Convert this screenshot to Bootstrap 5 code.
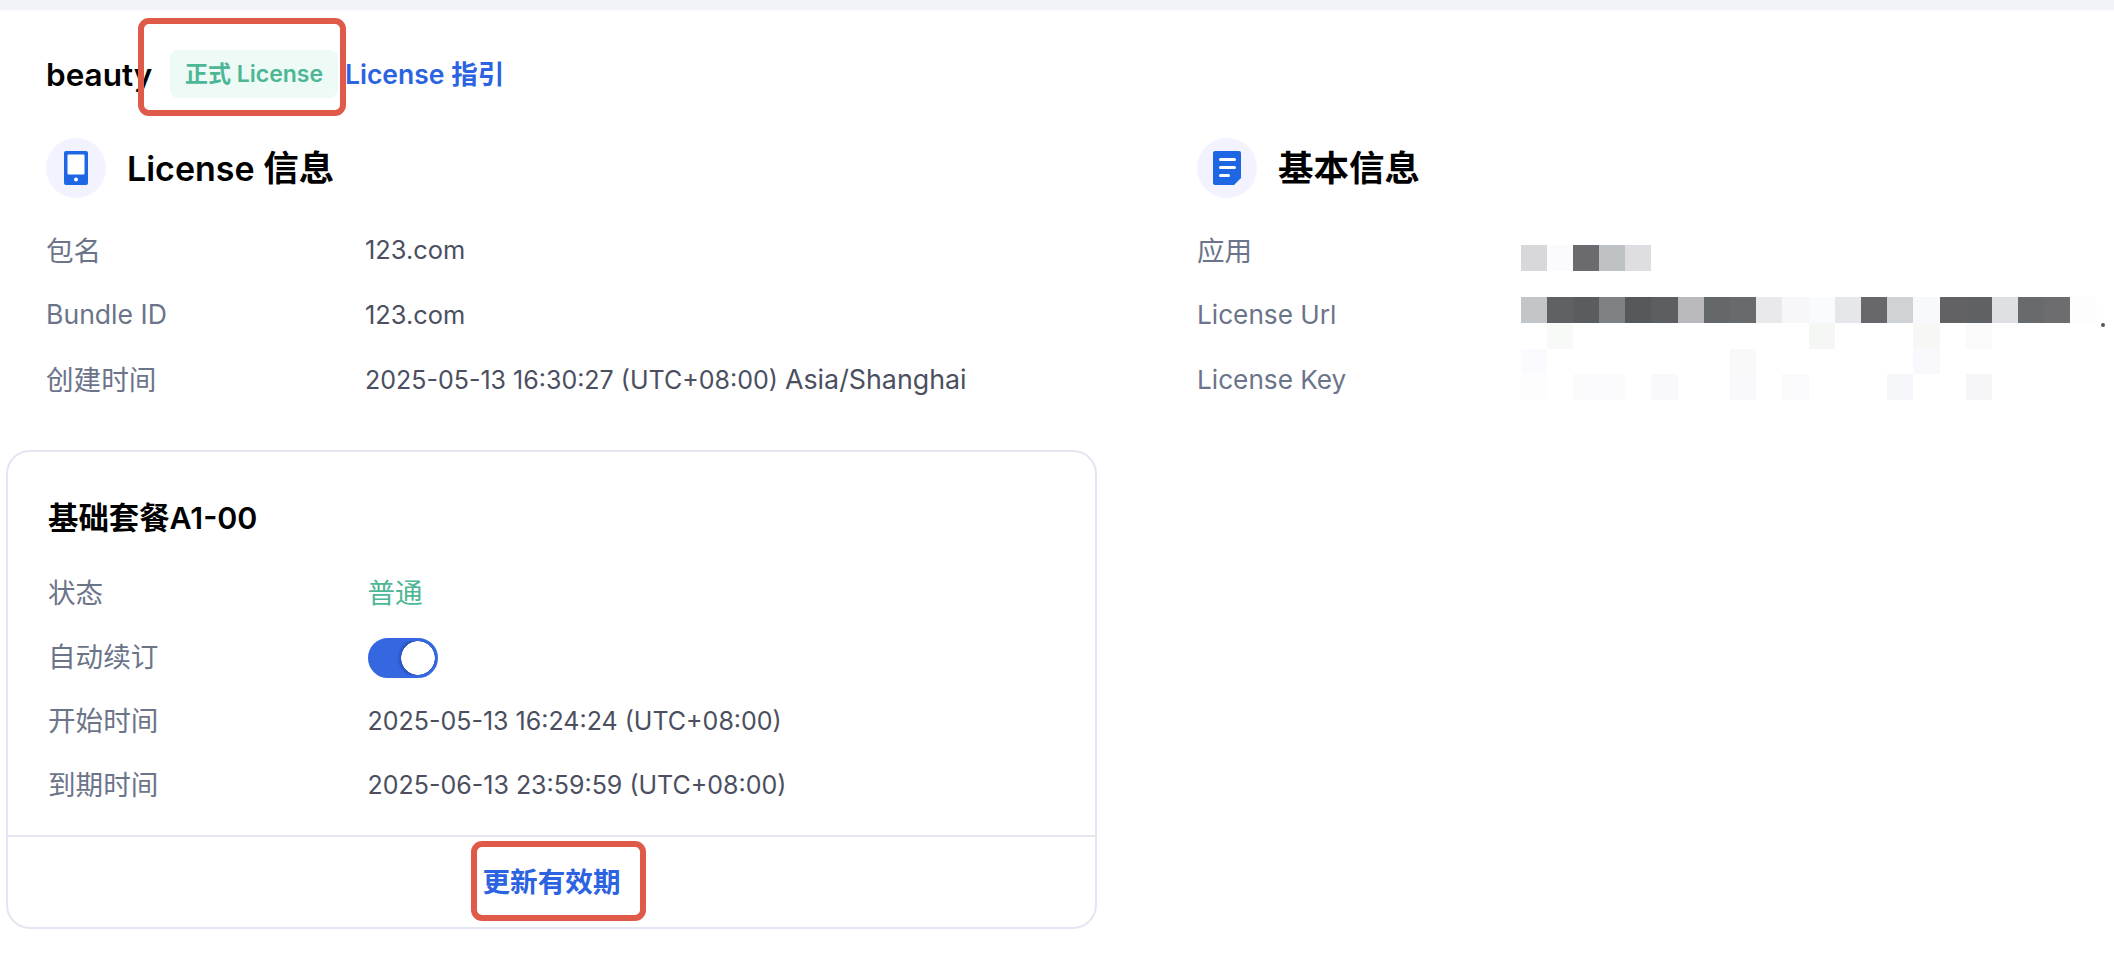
<!DOCTYPE html>
<html lang="zh-CN">
<head>
<meta charset="utf-8">
<title>License</title>
<link href="https://cdn.jsdelivr.net/npm/bootstrap@5.3.0/dist/css/bootstrap.min.css" rel="stylesheet">
<style>
body{font-family:Inter,"Noto Sans CJK SC",sans-serif;background:#fff;color:#4b4f60;font-size:25.4px}
.top-band{height:10px;background:#f2f3f8}
.page-wrap{padding:40px 6px 29px 6px}
.hdr{height:48px;padding-left:40px}
.app-name{font-size:31.5px;font-weight:600;color:#000;width:124px;padding-top:2px}
.lic-badge{position:relative;height:48px;width:168px;background:#edfaf6;color:#4db795;border-radius:8px;font-size:23px;font-weight:600}
.guide-link{margin-left:7px;padding-top:2px;color:#2b63e0;font-weight:600;font-size:26.5px;text-decoration:none}
.red-box{position:absolute;border:6px solid #e05a4a;border-radius:11px;pointer-events:none}
.red-a{left:-32px;right:-8px;top:-32px;bottom:-18px}
.info-cols{margin-top:40px;padding-left:40px}
.info-left{width:1151px}
.sec-head{height:60px;gap:21px;margin-bottom:20px}
.ico-circle{width:60px;height:60px;border-radius:50%;background:#f2f3fe}
.sec-title{font-size:34px;font-weight:600;color:#000;padding-top:2px}
.sec-title .han{font-size:35.5px}
.kv-row{height:64.5px}
.kv-label{width:319px;color:#6c7489;font-size:26.6px}
.kv-label .han,.kv-label-r .han{font-size:27.6px;display:inline-block;padding-top:2px}
.kv-label-r{width:323.5px;color:#6c7489;font-size:26.2px}
.kv-date{font-size:25px}
.kv-place{font-size:26.8px}
.kv-mosaic-wrap{position:relative;height:193.5px}
.mosaic{display:grid;grid-template-columns:repeat(22,26.2px);grid-auto-rows:25.9px;margin-top:27px}
.mosaic-labels{width:323.5px;flex:none}
.dot-end{position:absolute;width:4px;height:4px;border-radius:50%;background:#555;left:904px;top:105px}
.plan-card{margin-top:38.5px;width:1091px;height:479px;border:2px solid #e3e6f0;border-radius:24px;--bs-card-bg:#fff;overflow:visible}
.plan-body{padding:0 40px;height:383px;flex:none}
.plan-title{font-size:30.4px;font-weight:600;color:#000;height:110px;padding-top:33px;line-height:66px}
.plan-title span{display:block}
.kv-row-c{height:64px}
.kv-label-c{width:319.5px;color:#6c7489;font-size:27.6px}
.val-c{font-size:25px}
.ok-text{color:#4db795;font-size:27.6px}
.tog{width:70px!important;height:40px;margin:0!important;float:none!important;background-color:#3567e0!important;border:3px solid #3567e0!important;box-shadow:none!important;background-image:radial-gradient(circle at calc(100% - 17px) 50%,#fff 16.5px,#2a52b8 17px,#3567e0 21px)!important;background-size:100% 100%!important;background-position:center!important}
.plan-foot{border-top:2px solid #e3e6f0;background:transparent;padding:0;flex:1}
.renew{position:relative;display:inline-block;line-height:40px;color:#2b63e0;font-weight:600;font-size:27.6px;text-decoration:none}
.red-b{left:-12px;right:-26px;top:-21px;bottom:-19px}
</style>
</head>
<body>
<div class="top-band"></div>
<div class="page-wrap">
  <div class="hdr d-flex align-items-center">
    <span class="app-name">beauty</span>
    <span class="lic-badge d-inline-flex align-items-center justify-content-center">正式 License<span class="red-box red-a"></span></span>
    <a class="guide-link" href="#">License 指引</a>
  </div>
  <div class="info-cols d-flex">
    <div class="info-left">
      <div class="sec-head d-flex align-items-center">
        <span class="ico-circle d-flex align-items-center justify-content-center">
          <svg width="24" height="34" viewBox="0 0 24 34"><rect width="24" height="34" rx="2" fill="#1f66e5"/><rect x="3.5" y="3.5" width="17" height="20" rx="1" fill="#fff"/><circle cx="12" cy="28.5" r="2" fill="#fff"/></svg>
        </span>
        <span class="sec-title">License <span class="han">信息</span></span>
      </div>
      <div class="kv-row d-flex align-items-center"><span class="kv-label"><span class="han">包名</span></span><span>123.com</span></div>
      <div class="kv-row d-flex align-items-center"><span class="kv-label">Bundle ID</span><span>123.com</span></div>
      <div class="kv-row d-flex align-items-center"><span class="kv-label"><span class="han">创建时间</span></span><span><span class="kv-date">2025-05-13 16:30:27 (UTC+08:00)</span> <span class="kv-place">Asia/Shanghai</span></span></div>
    </div>
    <div class="flex-grow-1">
      <div class="sec-head d-flex align-items-center">
        <span class="ico-circle d-flex align-items-center justify-content-center">
          <svg width="28" height="34" viewBox="0 0 28 34"><path d="M2 0H26a2 2 0 0 1 2 2V27L21 34H2a2 2 0 0 1-2-2V2a2 2 0 0 1 2-2Z" fill="#1f66e5"/><rect x="6" y="7" width="17" height="3" rx="1.5" fill="#fff"/><rect x="6" y="15" width="17" height="3" rx="1.5" fill="#fff"/><rect x="6" y="23" width="11" height="3" rx="1.5" fill="#fff"/></svg>
        </span>
        <span class="sec-title"><span class="han">基本信息</span></span>
      </div>
      <div class="kv-mosaic-wrap d-flex">
        <div class="mosaic-labels">
          <div class="kv-row d-flex align-items-center"><span class="kv-label-r"><span class="han">应用</span></span></div>
          <div class="kv-row d-flex align-items-center"><span class="kv-label-r">License Url</span></div>
          <div class="kv-row d-flex align-items-center"><span class="kv-label-r">License Key</span></div>
        </div>
        <div class="mosaic" id="mos"></div>
        <span class="dot-end"></span>
      </div>
    </div>
  </div>
  <div class="card plan-card">
    <div class="plan-body">
      <div class="plan-title"><span>基础套餐A1-00</span></div>
      <div class="kv-row-c d-flex align-items-center"><span class="kv-label-c">状态</span><span class="ok-text">普通</span></div>
      <div class="kv-row-c d-flex align-items-center"><span class="kv-label-c">自动续订</span><span class="form-check form-switch m-0 p-0 d-flex"><input class="form-check-input tog" type="checkbox" role="switch" checked aria-label="自动续订"></span></div>
      <div class="kv-row-c d-flex align-items-center"><span class="kv-label-c">开始时间</span><span class="val-c">2025-05-13 16:24:24 (UTC+08:00)</span></div>
      <div class="kv-row-c d-flex align-items-center"><span class="kv-label-c">到期时间</span><span class="val-c">2025-06-13 23:59:59 (UTC+08:00)</span></div>
    </div>
    <div class="card-footer plan-foot d-flex align-items-center justify-content-center">
      <a class="renew" href="#">更新有效期<span class="red-box red-b"></span></a>
    </div>
  </div>
</div>
<script>
var rows=[
 {0:'#d8d8db',1:'#fbfbfd',2:'#6b6a6e',3:'#bfc2c5',4:'#dedee2'},
 {},
 {0:'#c3c6c9',1:'#5f6265',2:'#5a5d60',3:'#7f8285',4:'#56595c',5:'#5c5f62',6:'#b9b8bc',7:'#65686b',8:'#686b6e',9:'#e9e9eb',10:'#f7f7fa',11:'#fafbfe',12:'#e6e7ea',13:'#68676b',14:'#d0d3d6',15:'#f8f9fc',16:'#626265',17:'#5f6265',18:'#dfe0e3',19:'#686b6d',20:'#6d6d70',21:'#fdfdfe'},
 {1:'#f8faf8',11:'#f5f7f5',15:'#f7f7f5',17:'#fafafa'},
 {0:'#fafaff',8:'#f9f9f9',15:'#f9f9fd'},
 {0:'#fdfdfe',2:'#fbfbfe',3:'#fbfbfe',5:'#f9f9fc',8:'#f9f9fb',10:'#fafafc',14:'#f6f7fa',17:'#f6f6f9'}
];
var m=document.getElementById('mos');
rows.forEach(function(r){for(var i=0;i<22;i++){var c=document.createElement('div');if(r[i])c.style.background=r[i];m.appendChild(c);}});
</script>
<script src="https://cdn.jsdelivr.net/npm/bootstrap@5.3.0/dist/js/bootstrap.bundle.min.js"></script>
</body>
</html>
